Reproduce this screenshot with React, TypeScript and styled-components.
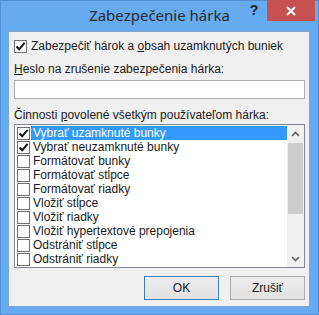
import React from 'react'
import styled, { createGlobalStyle } from 'styled-components'

const GlobalStyle = createGlobalStyle`
  html, body {
    margin: 0;
    padding: 0;
    background: #ffffff;
  }
  body {
    font-family: "Liberation Sans", Arial, sans-serif;
  }
`

const actions = [
  { label: 'Vybrať uzamknuté bunky', checked: true },
  { label: 'Vybrať neuzamknuté bunky', checked: true },
  { label: 'Formátovať bunky', checked: false },
  { label: 'Formátovať stĺpce', checked: false },
  { label: 'Formátovať riadky', checked: false },
  { label: 'Vložiť stĺpce', checked: false },
  { label: 'Vložiť riadky', checked: false },
  { label: 'Vložiť hypertextové prepojenia', checked: false },
  { label: 'Odstrániť stĺpce', checked: false },
  { label: 'Odstrániť riadky', checked: false },
]

const Check: React.FC<{ checked: boolean }> = ({ checked }) => (
  <StyledBox>
    {checked ? (
      <svg width="11" height="11" viewBox="0 0 11 11">
        <path d="M1.5 5.5 L4.2 8.3 L9.6 1.8" fill="none" stroke="#111" strokeWidth="2" />
      </svg>
    ) : null}
  </StyledBox>
)

const App: React.FC = () => {
  return (
    <>
      <GlobalStyle />
      <StyledWindow>
        <StyledTitleBar>
          <span />
          <StyledTitle>Zabezpečenie hárka</StyledTitle>
          <StyledControls>
            <StyledHelp>?</StyledHelp>
            <StyledClose>
              <svg width="10" height="10" viewBox="0 0 10 10">
                <path d="M1 1 L9 9 M9 1 L1 9" stroke="#fff" strokeWidth="2" />
              </svg>
            </StyledClose>
          </StyledControls>
        </StyledTitleBar>

        <StyledClient>
          <StyledCheckRow>
            <Check checked />
            <StyledLabel>
              Zabezpečiť hárok a <u>o</u>bsah uzamknutých buniek
            </StyledLabel>
          </StyledCheckRow>

          <StyledFieldLabel>
            <u>H</u>eslo na zrušenie zabezpečenia hárka:
          </StyledFieldLabel>
          <StyledInput />

          <StyledFieldLabel>
            Činnosti <u>p</u>ovolené všetkým používateľom hárka:
          </StyledFieldLabel>

          <StyledList>
            <StyledItems>
              {actions.map((a, i) => (
                <StyledItem key={a.label}>
                  <Check checked={a.checked} />
                  <StyledItemText selected={i === 0}>{a.label}</StyledItemText>
                </StyledItem>
              ))}
            </StyledItems>
            <StyledScrollbar>
              <StyledArrow>
                <svg width="9" height="6" viewBox="0 0 9 6">
                  <path d="M1 5 L4.5 1.5 L8 5" fill="none" stroke="#606060" strokeWidth="1.6" />
                </svg>
              </StyledArrow>
              <StyledTrack>
                <StyledThumb />
              </StyledTrack>
              <StyledArrow>
                <svg width="9" height="6" viewBox="0 0 9 6">
                  <path d="M1 1 L4.5 4.5 L8 1" fill="none" stroke="#606060" strokeWidth="1.6" />
                </svg>
              </StyledArrow>
            </StyledScrollbar>
          </StyledList>

          <StyledButtons>
            <StyledButton primary>OK</StyledButton>
            <StyledButton>Zrušiť</StyledButton>
          </StyledButtons>
        </StyledClient>
      </StyledWindow>
    </>
  )
}

const StyledWindow = styled.div`
  width: 319px;
  height: 315px;
  box-sizing: border-box;
  background: #66aaf0;
  border: 1px solid #4f8ed6;
  display: flex;
  flex-direction: column;
`

const StyledTitleBar = styled.div`
  height: 30px;
  display: grid;
  grid-template-columns: 1fr auto 1fr;
  align-items: start;
`

const StyledTitle = styled.div`
  font-family: "Noto Sans", "Liberation Sans", sans-serif;
  font-size: 15px;
  line-height: 28px;
  color: #2b2b2b;
  white-space: nowrap;
`

const StyledControls = styled.div`
  display: flex;
  justify-content: flex-end;
  align-items: flex-start;
  margin-top: -1px;
  padding-right: 3px;
`

const StyledHelp = styled.div`
  width: 26px;
  height: 20px;
  font-weight: bold;
  font-size: 14px;
  line-height: 20px;
  color: #222;
  text-align: center;
`

const StyledClose = styled.div`
  width: 48px;
  height: 21px;
  background: #c75050;
  display: flex;
  align-items: center;
  justify-content: center;
`

const StyledClient = styled.div`
  flex: 1;
  margin: 0 8px 7px 7px;
  background: #f0f0f0;
  border: 1px solid #7ea6d0;
  padding: 7px 4px 0 5px;
  display: flex;
  flex-direction: column;
  font-size: 12px;
  color: #1a1a1a;
`

const StyledCheckRow = styled.div`
  display: flex;
  align-items: center;
  gap: 4px;
  height: 14px;
`

const StyledLabel = styled.span`
  line-height: 14px;
  white-space: nowrap;
`

const StyledBox = styled.span`
  width: 13px;
  height: 13px;
  box-sizing: border-box;
  border: 1px solid #707070;
  background: #fff;
  display: flex;
  align-items: center;
  justify-content: center;
  flex-shrink: 0;
`

const StyledFieldLabel = styled.div`
  margin-top: 9px;
  line-height: 15px;
  white-space: nowrap;
`

const StyledInput = styled.div`
  margin-top: 3px;
  height: 19px;
  box-sizing: border-box;
  border: 1px solid #abadb3;
  background: #fff;
`

const StyledList = styled.div`
  margin-top: 1px;
  height: 144px;
  box-sizing: border-box;
  border: 1px solid #828790;
  background: #fff;
  display: flex;
`

const StyledItems = styled.div`
  flex: 1;
  padding: 1px 0 0 2px;
  display: flex;
  flex-direction: column;
`

const StyledItem = styled.div`
  height: 14px;
  display: flex;
  align-items: center;
  gap: 1px;
`

const StyledItemText = styled.span<{ selected?: boolean }>`
  flex: 1;
  height: 14px;
  line-height: 14px;
  padding-left: 2px;
  white-space: nowrap;
  background: ${(p) => (p.selected ? '#3399ff' : 'transparent')};
  color: ${(p) => (p.selected ? '#ffffff' : '#1a1a1a')};
`

const StyledScrollbar = styled.div`
  width: 17px;
  background: #f0f0f0;
  display: flex;
  flex-direction: column;
`

const StyledArrow = styled.div`
  height: 17px;
  display: flex;
  align-items: center;
  justify-content: center;
`

const StyledTrack = styled.div`
  flex: 1;
  padding: 1px 1px 0 1px;
`

const StyledThumb = styled.div`
  height: 71px;
  background: #cdcdcd;
`

const StyledButtons = styled.div`
  margin-top: 8px;
  display: flex;
  justify-content: flex-end;
  gap: 11px;
`

const StyledButton = styled.div<{ primary?: boolean }>`
  width: 75px;
  height: 24px;
  box-sizing: border-box;
  border: 1px solid ${(p) => (p.primary ? '#3c7fb1' : '#acacac')};
  background: linear-gradient(#ececec, #e2e2e2);
  display: flex;
  align-items: center;
  justify-content: center;
  color: #1a1a1a;
`

export default App
